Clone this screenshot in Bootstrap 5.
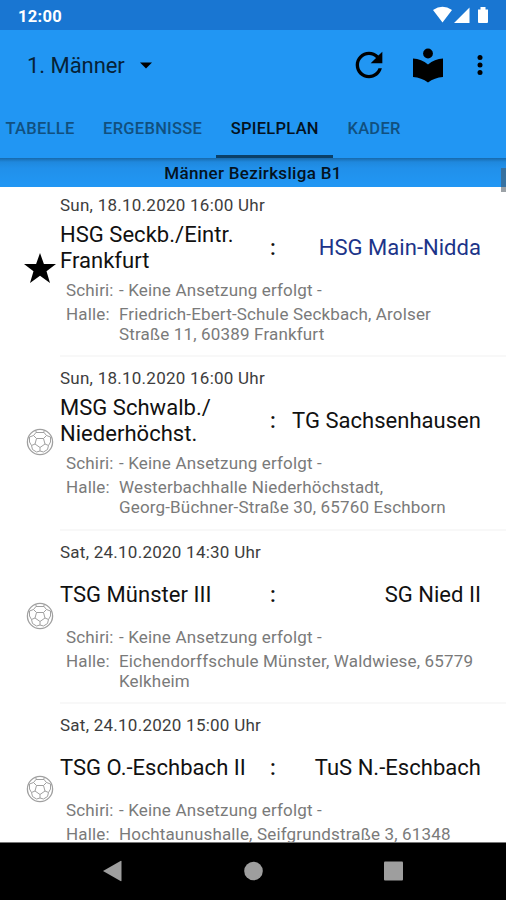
<!DOCTYPE html>
<html lang="de">
<head>
<meta charset="utf-8">
<meta name="viewport" content="width=device-width, initial-scale=1">
<title>Spielplan</title>
<link href="https://cdn.jsdelivr.net/npm/bootstrap@5.3.0/dist/css/bootstrap.min.css" rel="stylesheet">
<style>
body{font-family:Roboto,"Liberation Sans",sans-serif;width:506px;height:900px;color:#111}
.status{height:30px;background:#1976d2;padding:3px 15px 0 18px;font-size:16.5px;line-height:27px;letter-spacing:.3px}
.appbar{height:128px;background:#2196f3}
.toolbar-row{height:70px;padding-left:27px}
.team-select{font-size:22px;color:#062238;letter-spacing:-.05px}
.team-select svg{margin-left:15px}
.tool-icons{padding-right:18px}
.tool-icons .reader{margin:0 22px 3px 15px}
.tabs{height:58px;font-size:16.5px;font-weight:500;color:#11507f}
.tabs .tab{padding-top:17px;line-height:24px;height:58px;letter-spacing:.27px;border-bottom:3px solid transparent;padding-left:14.4px;padding-right:14.2px}
.tabs .tab:first-child{padding-left:5.5px}
.tabs .tab.current{color:#04121e;border-bottom-color:#0b4068}
.league{height:29px;background:linear-gradient(#1769ab 0,#1f88dd 4px,#2190ea 10px,#2196f3 26px);font-size:17px;font-weight:500;line-height:30px;color:#04121e;letter-spacing:.32px}
.fixtures{height:655px}
.fixture{height:173.5px;flex:none}
.fixture:first-child{margin-top:-3.5px}
.side{width:60px;padding:69px 0 0 24px}
.detail{padding:11px 0 0;border-bottom:2px solid #f8f8f8}
.date{font-size:17px;line-height:20px;color:#3d3d3d;letter-spacing:.25px}
.teams{height:52px;margin-top:7.4px;padding-right:25px;font-size:22px;line-height:26px;letter-spacing:.03px}
.home{width:202px}
.colon{width:22px;font-weight:500}
.away{color:#111}
.away.own{color:#1c3489}
.info{font-size:17px;line-height:20px;color:#7a7a7a;padding-left:6px;padding-top:5.9px;letter-spacing:.16px}
.info dt{width:53px;font-weight:400}
.info dd{margin:0}
.thumb{left:501px;top:168px;width:5px;height:24px;background:rgba(75,85,95,.55)}
.navkeys{height:58px;background:#000;border-top:1px solid #777}
</style>
<script src="https://cdn.jsdelivr.net/npm/bootstrap@5.3.0/dist/js/bootstrap.bundle.min.js"></script>
</head>
<body class="d-flex flex-column overflow-hidden position-relative bg-white">
<svg class="d-none">
<symbol id="ball" viewBox="0 0 32 32"><g fill="none" stroke="#a0a0a0" stroke-width="1"><circle cx="16" cy="16" r="12.600" stroke-width="1.300"/><path d="M12.500 12.500h7l1.500 5.500-5 3.500-5-3.500zM12.500 12.500 9.500 9.500M19.500 12.500 22.500 9.500M21 18l3.500 1.500M11 18l-3.500 1.500M16 21.500V25M9.500 9.500 12 6.500h8l2.500 3M9.500 9.500 5.500 11v5l2 3.500M22.500 9.500l4 1.500v5l-2 3.500M7.500 19.500l1 4L12.500 26 16 25l3.500 1 4-2.500 1-4M12 6.500V4.500M20 6.500V4.500"/></g></symbol>
</svg>
<div class="status d-flex justify-content-between text-white fw-bold flex-shrink-0">
<span>12:00</span>
<svg width="58" height="26" viewBox="0 0 58 26" fill="#fff"><path d="M0 7Q9.500 .5 19 7L9.500 19.500zM36.500 4.500V20H21zM45 6.500h2.500V4h5v2.500H55V19q0 1-1 1h-8q-1 0-1-1z"/></svg>
</div>
<header class="appbar flex-shrink-0">
<div class="toolbar-row d-flex align-items-center justify-content-between">
<div class="team-select d-flex align-items-center">1. Männer<svg width="12" height="7" viewBox="0 0 12 7"><path d="M0 .5h12L6 6.500z"/></svg></div>
<div class="tool-icons d-flex align-items-center">
<svg width="40" height="40" viewBox="0 0 24 24"><path d="M17.650 6.350C16.200 4.900 14.210 4 12 4c-4.420 0-7.990 3.580-7.990 8s3.570 8 7.990 8c3.730 0 6.840-2.550 7.730-6h-2.080c-.82 2.330-3.040 4-5.650 4-3.310 0-6-2.690-6-6s2.690-6 6-6c1.660 0 3.140.69 4.220 1.780L13 11h7V4z"/></svg>
<svg class="reader" width="46" height="42" viewBox="0 0 46 42"><circle cx="24" cy="10.500" r="4.900"/><path d="M9 15.500Q17.500 16 24 21.500 30.500 16 39 15.500V34Q30.500 34.500 24 39.500 17.500 34.500 9 34z"/></svg>
<svg width="16" height="24" viewBox="0 0 16 24"><circle cx="8" cy="4.500" r="2.500"/><circle cx="8" cy="12" r="2.500"/><circle cx="8" cy="19.500" r="2.500"/></svg>
</div>
</div>
<nav class="tabs d-flex">
<div class="tab">TABELLE</div><div class="tab">ERGEBNISSE</div><div class="tab current">SPIELPLAN</div><div class="tab">KADER</div>
</nav>
</header>
<div class="league text-center flex-shrink-0">Männer Bezirksliga B1</div>
<main class="fixtures d-flex flex-column overflow-hidden flex-shrink-0">
<section class="fixture d-flex">
<div class="side"><svg width="32" height="32" viewBox="0 0 32 32"><path d="M16 0l3.900 11H32l-9.500 7.200L26 30l-10-7.200L6 30l3.500-11.800L0 11h12.100z"/></svg></div>
<div class="detail flex-grow-1"><div class="date">Sun, 18.10.2020 16:00 Uhr</div>
<div class="teams d-flex align-items-center"><div class="home">HSG Seckb./Eintr.<br>Frankfurt</div><div class="colon text-center">:</div><div class="away own text-end flex-grow-1">HSG Main-Nidda</div></div>
<dl class="info mb-0"><div class="d-flex mb-1"><dt>Schiri:</dt><dd>- Keine Ansetzung erfolgt -</dd></div><div class="d-flex"><dt>Halle:</dt><dd>Friedrich-Ebert-Schule Seckbach, Arolser<br>Straße 11, 60389 Frankfurt</dd></div></dl></div>
</section>
<section class="fixture d-flex">
<div class="side"><svg width="32" height="32"><use href="#ball"/></svg></div>
<div class="detail flex-grow-1"><div class="date">Sun, 18.10.2020 16:00 Uhr</div>
<div class="teams d-flex align-items-center"><div class="home">MSG Schwalb./<br>Niederhöchst.</div><div class="colon text-center">:</div><div class="away text-end flex-grow-1">TG Sachsenhausen</div></div>
<dl class="info mb-0"><div class="d-flex mb-1"><dt>Schiri:</dt><dd>- Keine Ansetzung erfolgt -</dd></div><div class="d-flex"><dt>Halle:</dt><dd>Westerbachhalle Niederhöchstadt,<br>Georg-Büchner-Straße 30, 65760 Eschborn</dd></div></dl></div>
</section>
<section class="fixture d-flex">
<div class="side"><svg width="32" height="32"><use href="#ball"/></svg></div>
<div class="detail flex-grow-1"><div class="date">Sat, 24.10.2020 14:30 Uhr</div>
<div class="teams d-flex align-items-center"><div class="home">TSG Münster III</div><div class="colon text-center">:</div><div class="away text-end flex-grow-1">SG Nied II</div></div>
<dl class="info mb-0"><div class="d-flex mb-1"><dt>Schiri:</dt><dd>- Keine Ansetzung erfolgt -</dd></div><div class="d-flex"><dt>Halle:</dt><dd>Eichendorffschule Münster, Waldwiese, 65779<br>Kelkheim</dd></div></dl></div>
</section>
<section class="fixture d-flex">
<div class="side"><svg width="32" height="32"><use href="#ball"/></svg></div>
<div class="detail flex-grow-1"><div class="date">Sat, 24.10.2020 15:00 Uhr</div>
<div class="teams d-flex align-items-center"><div class="home">TSG O.-Eschbach II</div><div class="colon text-center">:</div><div class="away text-end flex-grow-1">TuS N.-Eschbach</div></div>
<dl class="info mb-0"><div class="d-flex mb-1"><dt>Schiri:</dt><dd>- Keine Ansetzung erfolgt -</dd></div><div class="d-flex"><dt>Halle:</dt><dd>Hochtaunushalle, Seifgrundstraße 3, 61348</dd></div></dl></div>
</section>
</main>
<div class="thumb position-absolute"></div>
<footer class="navkeys d-flex justify-content-center flex-shrink-0">
<svg width="320" height="57" viewBox="0 0 320 57" fill="#9e9e9e"><path d="M10 28 27.500 18q1-.5 1 .5v19q0 1-1 .5z"/><circle cx="160.500" cy="28" r="9.300"/><rect x="291" y="18.500" width="19" height="19" rx="1"/></svg>
</footer>
</body>
</html>
